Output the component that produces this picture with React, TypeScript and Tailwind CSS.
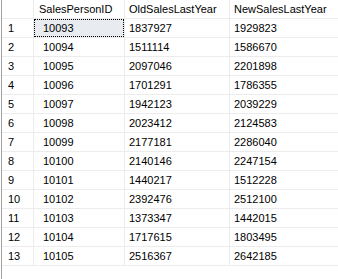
import React from "react";

const rows: [number, number, number, number][] = [
  [1, 10093, 1837927, 1929823],
  [2, 10094, 1511114, 1586670],
  [3, 10095, 2097046, 2201898],
  [4, 10096, 1701291, 1786355],
  [5, 10097, 1942123, 2039229],
  [6, 10098, 2023412, 2124583],
  [7, 10099, 2177181, 2286040],
  [8, 10100, 2140146, 2247154],
  [9, 10101, 1440217, 1512228],
  [10, 10102, 2392476, 2512100],
  [11, 10103, 1373347, 1442015],
  [12, 10104, 1717615, 1803495],
  [13, 10105, 2516367, 2642185],
];

const cell = "h-[19px] border-r border-b border-[#ececec] flex items-center whitespace-nowrap overflow-hidden";

export default function App() {
  return (
    <div className="w-[338px] h-[279px] bg-white pl-px overflow-hidden font-['Liberation_Sans',Arial,sans-serif] text-[11px] text-black">
      <div className="h-full border-l border-[#a0a0a0]">
        <div className="grid grid-cols-[32px_91px_105px_1fr]">
          <div className={cell} />
          <div className={`${cell} pl-[5px]`}>SalesPersonID</div>
          <div className={`${cell} pl-[4px]`}>OldSalesLastYear</div>
          <div className={`${cell} pl-[4px] border-r-0`}>NewSalesLastYear</div>
          {rows.map(([n, id, oldS, newS]) => (
            <React.Fragment key={n}>
              <div className={`${cell} pl-[6px]`}>{n}</div>
              {n === 1 ? (
                <div className={`${cell} p-0`}>
                  <div className="h-full w-full bg-[#e8ecf1] border border-dotted border-black flex items-center pl-[8px]">
                    {id}
                  </div>
                </div>
              ) : (
                <div className={`${cell} pl-[9px]`}>{id}</div>
              )}
              <div className={`${cell} pl-[4px]`}>{oldS}</div>
              <div className={`${cell} pl-[4px] border-r-0`}>{newS}</div>
            </React.Fragment>
          ))}
        </div>
      </div>
    </div>
  );
}
